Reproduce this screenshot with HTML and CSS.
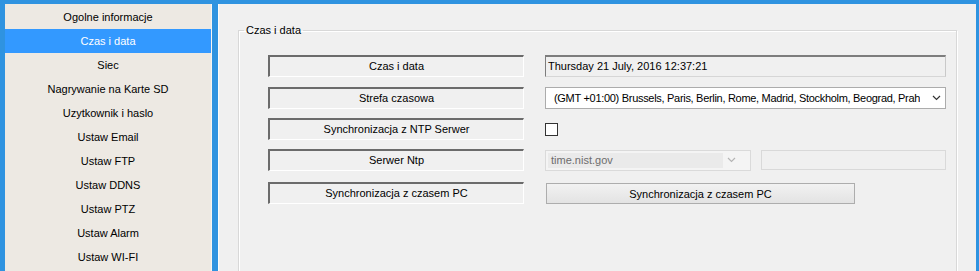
FILE: index.html
```html
<!DOCTYPE html>
<html>
<head>
<meta charset="utf-8">
<link rel="stylesheet" href="styles.css">
</head>
<body>
<div class="window">
  <nav class="sidebar">
    <div class="item">Ogolne informacje</div>
    <div class="item selected">Czas i data</div>
    <div class="item">Siec</div>
    <div class="item">Nagrywanie na Karte SD</div>
    <div class="item">Uzytkownik i haslo</div>
    <div class="item">Ustaw Email</div>
    <div class="item">Ustaw FTP</div>
    <div class="item">Ustaw DDNS</div>
    <div class="item">Ustaw PTZ</div>
    <div class="item">Ustaw Alarm</div>
    <div class="item">Ustaw WI-FI</div>
  </nav>
  <main class="pane">
    <fieldset class="group">
      <legend class="group-title">Czas i data</legend>
      <div class="rows">
        <div class="row r1">
          <div class="label">Czas i data</div>
          <div class="value readonly">Thursday 21 July, 2016 12:37:21</div>
        </div>
        <div class="row r2">
          <div class="label">Strefa czasowa</div>
          <div class="combo">
            <span class="combo-text">(GMT +01:00) Brussels, Paris, Berlin, Rome, Madrid, Stockholm, Beograd, Prah</span>
            <svg class="chev" width="9" height="6" viewBox="0 0 9 6"><polyline points="1,1 4.5,4.5 8,1" fill="none" stroke="#333" stroke-width="1.2"/></svg>
          </div>
        </div>
        <div class="row r3">
          <div class="label">Synchronizacja z NTP Serwer</div>
          <div class="check-cell"><span class="checkbox"></span></div>
        </div>
        <div class="row r4">
          <div class="label">Serwer Ntp</div>
          <div class="ntp">
            <div class="combo disabled">
              <span class="combo-edit">time.nist.gov</span>
              <svg class="chev" width="9" height="6" viewBox="0 0 9 6"><polyline points="1,1 4.5,4.5 8,1" fill="none" stroke="#b5b5b5" stroke-width="1.2"/></svg>
            </div>
            <div class="textbox disabled"></div>
          </div>
        </div>
        <div class="row r5">
          <div class="label">Synchronizacja z czasem PC</div>
          <div class="btn-cell"><button class="btn">Synchronizacja z czasem PC</button></div>
        </div>
      </div>
    </fieldset>
  </main>
</div>
</body>
</html>
```
FILE: styles.css
```css
* { box-sizing: border-box; }
html, body {
  margin: 0;
  padding: 0;
  height: 100%;
  background: #2f93e0;
  overflow: hidden;
  font-family: "Liberation Sans", Arial, sans-serif;
  font-size: 11px;
  color: #000;
}
.window {
  display: flex;
  height: 271px;
  padding: 4px 3px 0 5px;
}
.sidebar {
  width: 207px;
  flex: none;
  background: #ede9e3;
  border-right: 1px solid #f7f5f2;
  padding-top: 1px;
}
.item {
  height: 24px;
  line-height: 25px;
  text-align: center;
  white-space: nowrap;
}
.item.selected {
  background: #3399ff;
  color: #fff;
}
.pane {
  flex: 1;
  margin-left: 6px;
  background: #f0f0f0;
  border-left: 1px solid #fbfbfb;
  padding: 19px 19px 0 19px;
  overflow: hidden;
}
.group {
  margin: 0;
  height: 250px;
  border: 1px solid #d8d8d8;
  box-shadow: inset 1px 1px 0 #fff, 1px 1px 0 #fff;
  padding: 0 0 0 29px;
  min-width: 0;
}
.group-title {
  padding: 0 2px;
  margin-left: -24px;
  line-height: 14px;
}
.rows {
  display: flex;
  flex-direction: column;
  padding-top: 18px;
}
.row {
  display: flex;
  align-items: center;
  height: 22px;
}
.r2 { margin-top: 10px; }
.r3 { margin-top: 9px; }
.r4 { margin-top: 9px; }
.r5 { margin-top: 11px; }
.label {
  width: 256px;
  height: 22px;
  flex: none;
  border-top: 2px solid #6b6b6b;
  border-left: 2px solid #6b6b6b;
  border-bottom: 1px solid #fff;
  border-right: 1px solid #fff;
  text-align: center;
  line-height: 19px;
  white-space: nowrap;
}
.value, .combo, .check-cell, .ntp, .btn-cell {
  margin-left: 21px;
}
.readonly {
  width: 401px;
  height: 22px;
  border-top: 2px solid #7d7d7d;
  border-left: 1px solid #7d7d7d;
  border-bottom: 1px solid #d6d6d6;
  border-right: 1px solid #c9c9c9;
  padding-left: 2px;
  line-height: 19px;
  white-space: nowrap;
  background: #f0f0f0;
}
.combo {
  width: 401px;
  height: 22px;
  background: #fff;
  border: 1px solid #acacac;
  display: flex;
  align-items: center;
  justify-content: space-between;
  padding: 0 4px 0 8px;
  white-space: nowrap;
  overflow: hidden;
}
.combo-text { overflow: hidden; letter-spacing: -0.3px; }
.chev { flex: none; margin-left: 4px; }
.check-cell { display: flex; align-items: center; }
.checkbox {
  display: block;
  width: 13px;
  height: 13px;
  border: 1px solid #333;
  background: #fff;
}
.ntp {
  display: flex;
  align-items: center;
}
.ntp .combo { margin-left: 0; }
.combo.disabled {
  width: 206px;
  height: 21px;
  background: #f4f4f4;
  border: 1px solid #dadada;
  padding: 2px 14px 2px 2px;
  color: #6d6d6d;
}
.combo-edit {
  flex: 1;
  height: 100%;
  background: #eaeaea;
  line-height: 15px;
  padding-left: 3px;
}
.textbox.disabled {
  margin-left: 10px;
  width: 185px;
  height: 20px;
  border: 1px solid #d9d9d9;
  background: #f0f0f0;
}
.btn-cell { margin-left: 22px; }
.btn {
  width: 309px;
  height: 21px;
  font: inherit;
  color: #000;
  border: 1px solid #adadad;
  background: linear-gradient(#f2f2f2, #e3e3e3);
  padding: 0;
  margin-top: 1px;
}
```
